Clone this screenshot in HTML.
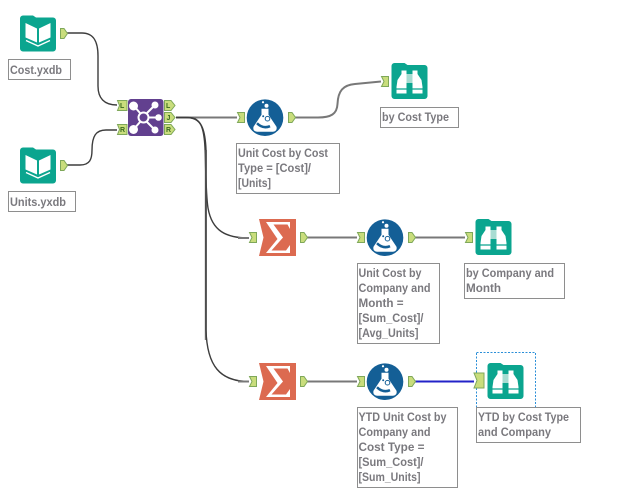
<!DOCTYPE html>
<html>
<head>
<meta charset="utf-8">
<style>
html,body{margin:0;padding:0;background:#fff;width:639px;height:501px;overflow:hidden}
svg{display:block}
text{font-family:"Liberation Sans",sans-serif;font-size:12px;font-weight:bold;fill:#7a797e}
.lb{fill:#fff;stroke:#8e8e8e;stroke-width:1}
.a{fill:#c9dd7c;stroke:#7fa85a;stroke-width:1}
text.al{font-size:7px;fill:#3a6a20;font-weight:bold}
.w{fill:none;stroke:#3d3d3d;stroke-width:1.400}
.g{fill:none;stroke:#787878;stroke-width:2}
</style>
</head>
<body>
<svg width="639" height="501" viewBox="0 0 639 501" xmlns="http://www.w3.org/2000/svg">
<defs>
<g id="book">
<path d="M3 0H13L16 2H33A3 3 0 0 1 36 5V33A3 3 0 0 1 33 36H3A3 3 0 0 1 0 33V3A3 3 0 0 1 3 0Z" fill="#0ba58f"/>
<path d="M5.500 7.500L17 13V27L5.500 22Z M30.500 7.500L19 13V27L30.500 22Z" fill="#fff"/>
<path d="M6 25L18 30.500L30 25" fill="none" stroke="#fff" stroke-width="1.300"/>
</g>
<g id="bino">
<path d="M3 0H13L16 2H33A3 3 0 0 1 36 5V33A3 3 0 0 1 33 36H3A3 3 0 0 1 0 33V3A3 3 0 0 1 3 0Z" fill="#0ba58f"/>
<path d="M10 7.500H15V30.500H5V24L6 17L10 11Z M26 7.500H21V30.500H31V24L30 17L26 11Z" fill="#fff"/>
<rect x="15" y="11" width="6" height="9" fill="#a8dcd2"/>
<path d="M5 26H15M21 26H31" stroke="#0ba58f" stroke-width="1.300"/>
</g>
<g id="flask">
<circle cx="0" cy="0" r="18.300" fill="#145f96"/>
<path d="M-3.500 -9H3.500V-3L11.500 9Q12.500 13.500 8 14H-8Q-12.500 13.500 -11.500 9L-3.500 -3Z" fill="#fff"/>
<path d="M-8 5.500Q-2 11.500 5 8.500" fill="none" stroke="#145f96" stroke-width="2.500"/>
<circle cx="2.500" cy="1" r="2.300" fill="none" stroke="#145f96" stroke-width="1"/>
<circle cx="-1.800" cy="-1.500" r="1" fill="#145f96"/>
<circle cx="1.500" cy="-12" r="2" fill="#fff"/>
<circle cx="-2" cy="-15.500" r="1.100" fill="#fff"/>
</g>
<g id="sum">
<path d="M0 0H37V37H0L4.500 18.500Z" fill="#dc6a50"/>
<path d="M7 3H31V10L28.500 5.500H14.500L24 18.500L12.500 31.500H27L31 26V34H7L18.500 20Z" fill="#fff"/>
</g>
<path id="out" class="a" d="M0.500 0.500H4L7.500 5.500L4 10.500H0.500Z"/>
<path id="in" class="a" d="M0.500 0.500H7.500V10.500H0.500L3 5.500Z"/>
</defs>

<!-- wires -->
<path class="w" d="M67 33H82C94 33 98 42 98 56V86C98 98 104 105 117 105"/>
<path class="w" d="M67 165H80C90 165 92 159 92 150C92 136 96 130 106 130H117"/>
<path class="g" d="M176 117.500H237"/>
<path class="w" d="M176 117.500H188C201 117.500 204 128 205 148C206 178 206 196 208 208C212 231 226 238 249 238"/>
<path class="g" d="M205.800 150V340"/>
<path class="w" d="M176 117.500H186C199 117.500 205 124 206 150V330C207 366 220 381.500 249 381.500"/>
<path class="g" d="M238 238H249M238 381.500H249"/>
<path class="g" d="M295 117.500H318C331 117.500 337 114 337.500 104C338 91 343 85 355 84L381 81.500"/>
<path class="g" d="M307 237.500H357M415 237.500H465M307 381.500H357"/>
<path d="M415 381.500H474" fill="none" stroke="#2323c8" stroke-width="2"/>

<!-- selection -->
<rect x="476.500" y="352.500" width="59" height="56" fill="none" stroke="#2b8fd8" stroke-width="1" stroke-dasharray="2 1.500"/>

<!-- tools -->
<use href="#book" x="20" y="15.500"/>
<use href="#out" x="60" y="28"/>
<rect class="lb" x="8.500" y="59.500" width="62" height="20"/>
<text x="10" y="74" textLength="52" lengthAdjust="spacingAndGlyphs">Cost.yxdb</text>

<use href="#book" x="20" y="147.500"/>
<use href="#out" x="60" y="160"/>
<rect class="lb" x="8.500" y="191.500" width="67" height="20"/>
<text x="10" y="206" textLength="56" lengthAdjust="spacingAndGlyphs">Units.yxdb</text>

<!-- join -->
<rect x="128" y="99" width="35.500" height="37" rx="3" fill="#62408f"/>
<g stroke="#fff" stroke-width="2" fill="none">
<path d="M134 106L140 113M134 129L140 122M155 105L147 113M158 117.500H149M155 130L147 122"/>
<circle cx="143.500" cy="117.500" r="5"/>
</g>
<g fill="#fff">
<circle cx="133.500" cy="106" r="4.500"/><circle cx="133.500" cy="129.500" r="4.500"/>
<circle cx="155" cy="105" r="3.500"/><circle cx="158.500" cy="117.500" r="3.300"/><circle cx="155" cy="130" r="3.500"/>
</g>
<path class="a" d="M117.500 100.500H127V110.500H117.500L119.500 105.500Z"/>
<path class="a" d="M117.500 124.500H127V134.500H117.500L119.500 129.500Z"/>
<path class="a" d="M164.500 100.500H171L175 105.500L171 110.500H164.500Z"/>
<path class="a" d="M164.500 112.500H171L175 117.500L171 122.500H164.500Z"/>
<path class="a" d="M164.500 124.500H171L175 129.500L171 134.500H164.500Z"/>
<text class="al" x="120" y="108">L</text><text class="al" x="120" y="132">R</text>
<text class="al" x="166" y="108">L</text><text class="al" x="166.500" y="120">J</text><text class="al" x="166" y="132">R</text>

<!-- formula 1 -->
<use href="#in" x="237" y="112"/>
<use href="#flask" x="265" y="117.700"/>
<use href="#out" x="288" y="112"/>
<rect class="lb" x="236.500" y="143.500" width="103" height="50"/>
<text x="238" y="157" textLength="90" lengthAdjust="spacingAndGlyphs">Unit Cost by Cost</text>
<text x="238" y="172" textLength="73" lengthAdjust="spacingAndGlyphs">Type = [Cost]/</text>
<text x="238" y="187" textLength="33" lengthAdjust="spacingAndGlyphs">[Units]</text>

<!-- browse 1 -->
<use href="#in" x="381" y="76"/>
<use href="#bino" x="391.500" y="63"/>
<rect class="lb" x="380.500" y="107.500" width="78" height="20"/>
<text x="382" y="121" textLength="67" lengthAdjust="spacingAndGlyphs">by Cost Type</text>

<!-- summarize 1 -->
<use href="#in" x="249" y="232"/>
<use href="#sum" x="259" y="219"/>
<use href="#out" x="300" y="232"/>

<!-- formula 2 -->
<use href="#in" x="357" y="232"/>
<use href="#flask" x="385" y="237.700"/>
<use href="#out" x="408" y="232"/>
<rect class="lb" x="357.500" y="263.500" width="82" height="80"/>
<text x="358.500" y="277" textLength="63" lengthAdjust="spacingAndGlyphs">Unit Cost by</text>
<text x="358.500" y="292" textLength="72" lengthAdjust="spacingAndGlyphs">Company and</text>
<text x="358.500" y="307" textLength="45" lengthAdjust="spacingAndGlyphs">Month =</text>
<text x="358.500" y="322" textLength="65" lengthAdjust="spacingAndGlyphs">[Sum_Cost]/</text>
<text x="358.500" y="337" textLength="60" lengthAdjust="spacingAndGlyphs">[Avg_Units]</text>

<!-- browse 2 -->
<use href="#in" x="465" y="232"/>
<use href="#bino" x="475.500" y="219"/>
<rect class="lb" x="464.500" y="263.500" width="100" height="35"/>
<text x="466" y="277" textLength="88" lengthAdjust="spacingAndGlyphs">by Company and</text>
<text x="466" y="292" textLength="35" lengthAdjust="spacingAndGlyphs">Month</text>

<!-- summarize 2 -->
<use href="#in" x="249" y="376"/>
<use href="#sum" x="259" y="363"/>
<use href="#out" x="300" y="376"/>

<!-- formula 3 -->
<use href="#in" x="357" y="376"/>
<use href="#flask" x="385" y="381.700"/>
<use href="#out" x="408" y="376"/>
<rect class="lb" x="357.500" y="407.500" width="100" height="80"/>
<text x="358.500" y="421" textLength="88" lengthAdjust="spacingAndGlyphs">YTD Unit Cost by</text>
<text x="358.500" y="436" textLength="72" lengthAdjust="spacingAndGlyphs">Company and</text>
<text x="358.500" y="451" textLength="66" lengthAdjust="spacingAndGlyphs">Cost Type =</text>
<text x="358.500" y="466" textLength="65" lengthAdjust="spacingAndGlyphs">[Sum_Cost]/</text>
<text x="358.500" y="481" textLength="62" lengthAdjust="spacingAndGlyphs">[Sum_Units]</text>

<!-- browse 3 -->
<path class="a" d="M474 373H484V388H474L477 380.500Z"/>
<use href="#bino" x="487.500" y="363"/>
<rect class="lb" x="476.500" y="407.500" width="104" height="35"/>
<text x="478" y="421" textLength="91" lengthAdjust="spacingAndGlyphs">YTD by Cost Type</text>
<text x="478" y="436" textLength="73" lengthAdjust="spacingAndGlyphs">and Company</text>
</svg>
</body>
</html>
